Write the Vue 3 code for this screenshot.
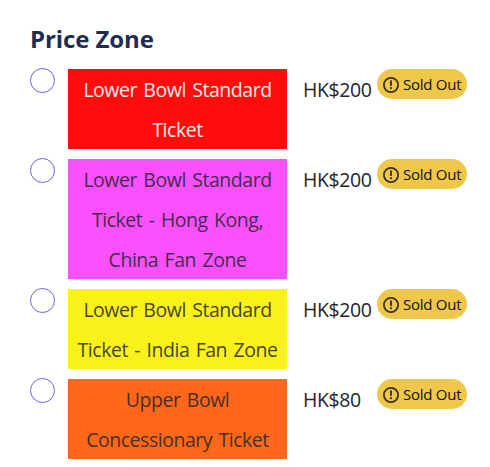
<template>
    <div class="price-zone">
        <h2>Price Zone</h2>
        <div class="zone-row" v-for="zone in zones" :key="zone.id">
            <input type="radio" name="zone" class="zone-radio" v-model="selected" :value="zone.id" :aria-label="zone.lines.join(' ')" />
            <div class="zone-name" :class="zone.color">
                <div v-for="line in zone.lines" :key="line" class="zone-line">{{ line }}</div>
            </div>
            <div class="zone-price">HK${{ zone.price }}</div>
            <div class="sold-out">
                <svg viewBox="0 0 16 16" width="16" height="16">
                    <circle cx="8" cy="8" r="7.1" fill="none" stroke="currentColor" stroke-width="1.8" />
                    <path d="M6.9 3.6h2.2L8.8 9H7.2z" fill="currentColor" />
                    <circle cx="8" cy="11.2" r="1.1" fill="currentColor" />
                </svg>
                <span>Sold Out</span>
            </div>
        </div>
    </div>
</template>

<script setup>
import { ref } from 'vue';

const selected = ref(null);

const zones = [
    { id: 1, color: 'red', price: 200, lines: ['Lower Bowl Standard', 'Ticket'] },
    { id: 2, color: 'pink', price: 200, lines: ['Lower Bowl Standard', 'Ticket - Hong Kong,', 'China Fan Zone'] },
    { id: 3, color: 'yellow', price: 200, lines: ['Lower Bowl Standard', 'Ticket - India Fan Zone'] },
    { id: 4, color: 'orange', price: 80, lines: ['Upper Bowl', 'Concessionary Ticket'] },
];
</script>

<style>
body {
    background: #fff;
}
</style>

<style scoped>
.price-zone {
    box-sizing: border-box;
    height: 467px;
    padding: 19px 0 0 30px;
    overflow: hidden;
    font-family: "Segoe UI", "Open Sans", "Noto Sans", sans-serif;
    font-size: 19.5px;
    letter-spacing: -0.5px;
    color: #212529;
}

h2 {
    margin: 0 0 10px;
    font-size: 24px;
    font-weight: 700;
    line-height: 40px;
    letter-spacing: -0.1px;
    color: #222c50;
}

.zone-row {
    display: flex;
    align-items: flex-start;
    margin-bottom: 10px;
}

.zone-radio {
    appearance: none;
    box-sizing: border-box;
    flex: none;
    width: 25px;
    height: 25px;
    margin: -1px 13px 0 0;
    border: 1px solid #6a65e0;
    border-radius: 50%;
    background: #fff;
}

.zone-name {
    flex: none;
    width: 219px;
    text-align: center;
    white-space: nowrap;
    letter-spacing: -0.47px;
    word-spacing: 1.8px;
    color: rgba(33, 37, 41, 0.85);
}

.zone-line {
    height: 40px;
    line-height: 42px;
}

.zone-name.red {
    background: #ff0d0d;
    color: #ffeaea;
}

.zone-name.pink {
    background: #fa50ff;
}

.zone-name.yellow {
    background: #faf01a;
}

.zone-name.orange {
    background: #ff671b;
}

.zone-price {
    flex: none;
    width: 74px;
    margin-left: 16px;
    line-height: 42px;
    letter-spacing: -0.4px;
    white-space: nowrap;
}

.sold-out {
    display: flex;
    align-items: center;
    box-sizing: border-box;
    flex: none;
    width: 90px;
    height: 30px;
    padding-left: 6px;
    border-radius: 15px;
    background: #efc74b;
    font-size: 15px;
    line-height: 30px;
    letter-spacing: -0.25px;
    white-space: nowrap;
    color: #111;
}

.sold-out svg {
    flex: none;
    margin: 2px 4px 0 0;
    color: #3b3012;
}
</style>
